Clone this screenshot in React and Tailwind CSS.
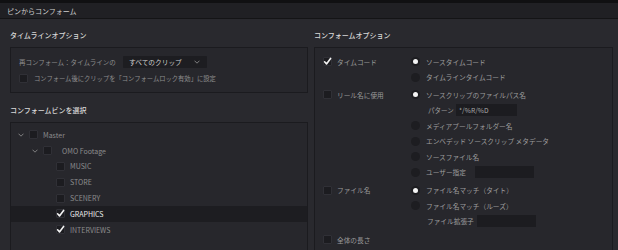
import React from "react";

const font = { fontFamily: '"Noto Sans CJK JP", "Noto Sans", sans-serif' };

function Check({ checked }) {
  return (
    <div className="w-[9px] h-[9px] shrink-0 rounded-[1px] bg-[#1c1c20] border border-[#303036] flex items-center justify-center">
      {checked && (
        <svg width="9" height="9" viewBox="0 0 9 9" className="overflow-visible">
          <path d="M1.6 4.8 L3.5 6.9 L7.6 1.4" fill="none" stroke="#f2f2f2" strokeWidth="1.6" strokeLinecap="round" strokeLinejoin="round" />
        </svg>
      )}
    </div>
  );
}

function Radio({ on }) {
  return (
    <div className="w-[9px] h-[9px] shrink-0 rounded-full bg-[#1d1d21] flex items-center justify-center">
      {on && <div className="w-[5px] h-[5px] rounded-full bg-[#f4f4f4]" />}
    </div>
  );
}

function Chevron() {
  return (
    <svg width="6" height="4" viewBox="0 0 6 4">
      <path d="M0.5 0.7 L3 3.2 L5.5 0.7" fill="none" stroke="#8a8a8a" strokeWidth="0.9" />
    </svg>
  );
}

function TreeRow({ indent, chevron, checked, label, selected, bright, gap = 5 }) {
  return (
    <div className={`h-[15.8px] flex items-center ${selected ? "bg-[#1d1d21]" : ""}`}>
      <div style={{ width: indent }} className="shrink-0" />
      <div className="w-[11px] shrink-0 flex items-center justify-start">{chevron && <Chevron />}</div>
      <Check checked={checked} />
      <span style={{ marginLeft: gap }} className={`text-[7px] leading-[12px] ${bright ? "text-[#ececec]" : "text-[#8c8c8c]"}`}>{label}</span>
    </div>
  );
}

function ORow({ left, children }) {
  return (
    <div className="h-[15.5px] flex items-center">
      <div className="w-[88px] shrink-0 flex items-center">
        {left && (
          <>
            <Check checked={left.checked} />
            <span className="ml-[5px] text-[6.7px] leading-[12px] text-[#9a9a9a]">{left.label}</span>
          </>
        )}
      </div>
      <div className="flex items-center">{children}</div>
    </div>
  );
}

function RadioItem({ on, label }) {
  return (
    <>
      <Radio on={on} />
      <span className="ml-[6px] text-[6.7px] leading-[12px] text-[#9e9e9e] whitespace-nowrap">{label}</span>
    </>
  );
}

export default function App() {
  return (
    <div style={font} className="w-[618px] h-[250px] overflow-hidden bg-[#29292e] flex flex-col">
      <div className="h-[3px] bg-[#101012] shrink-0" />
      <div className="h-[16px] shrink-0 bg-[#202024] border-b border-[#141416] flex items-center pl-[7px]">
        <span className="text-[7px] leading-[12px] text-[#cfcfcf]">ピンからコンフォーム</span>
      </div>
      <div className="flex pl-[10px] gap-[6px] flex-1">
        {/* Left column */}
        <div className="w-[298px] flex flex-col">
          <div className="mt-[9px] h-[14px] flex items-center text-[7px] leading-[12px] text-[#d8d8d8] font-medium">タイムラインオプション</div>
          <div className="mt-[5px] h-[46px] border border-[#1b1b1f] bg-[#27272c] pl-[8px] pt-[7px]">
            <div className="h-[13px] flex items-center">
              <div className="w-[104px] shrink-0 whitespace-nowrap text-[6.5px] leading-[12px] text-[#8e8e8e]">再コンフォーム：タイムラインの</div>
              <div className="w-[84px] h-[12px] bg-[#1d1d21] rounded-[1px] flex items-center pl-[6px] pr-[7px] justify-between">
                <span className="text-[6.7px] leading-[12px] text-[#cfcfcf]">すべてのクリップ</span>
                <Chevron />
              </div>
            </div>
            <div className="mt-[5px] h-[11px] flex items-center">
              <Check checked={false} />
              <span className="ml-[6px] text-[6.3px] leading-[12px] text-[#8e8e8e] whitespace-nowrap">コンフォーム後にクリップを「コンフォームロック有効」に設定</span>
            </div>
          </div>
          <div className="mt-[10px] h-[14px] flex items-center text-[7px] leading-[12px] text-[#d8d8d8] font-medium">コンフォームビンを選択</div>
          <div className="mt-[5px] flex-1 border border-[#1b1b1f] border-b-0 bg-[#27272c] pt-[4px]">
            <TreeRow indent={7} chevron checked={false} label="Master" />
            <TreeRow indent={21} chevron checked={false} label="OMO Footage" gap={10} />
            <TreeRow indent={34} checked={false} label="MUSIC" />
            <TreeRow indent={34} checked={false} label="STORE" />
            <TreeRow indent={34} checked={false} label="SCENERY" />
            <TreeRow indent={34} checked label="GRAPHICS" selected bright />
            <TreeRow indent={34} checked label="INTERVIEWS" />
          </div>
        </div>
        {/* Right column */}
        <div className="w-[299px] flex flex-col">
          <div className="mt-[9px] h-[14px] flex items-center text-[7px] leading-[12px] text-[#d8d8d8] font-medium">コンフォームオプション</div>
          <div className="mt-[5px] flex-1 border border-[#1b1b1f] border-b-0 bg-[#27272c] pl-[8px] pt-[6px]">
            <div>
              <ORow left={{ checked: true, label: "タイムコード" }}><RadioItem on label="ソースタイムコード" /></ORow>
              <ORow><RadioItem label="タイムラインタイムコード" /></ORow>
            </div>
            <div className="mt-[2px]">
              <ORow left={{ checked: false, label: "リール名に使用" }}><RadioItem on label="ソースクリップのファイルパス名" /></ORow>
              <ORow>
                <div className="w-[17px] shrink-0" />
                <div className="w-[28px] shrink-0 whitespace-nowrap text-[6.5px] leading-[12px] text-[#9e9e9e]">パターン</div>
                <div className="w-[61px] h-[12px] bg-[#1c1c20] flex items-center pl-[3px]">
                  <span className="text-[6.7px] leading-[12px] text-[#a8a8a8]">*/%R/%D</span>
                </div>
              </ORow>
              <ORow><RadioItem label="メディアプールフォルダー名" /></ORow>
              <ORow><RadioItem label="エンベデッド ソースクリップ メタデータ" /></ORow>
              <ORow><RadioItem label="ソースファイル名" /></ORow>
              <ORow>
                <Radio />
                <div className="ml-[6px] w-[49px] shrink-0 whitespace-nowrap text-[6.7px] leading-[12px] text-[#9e9e9e]">ユーザー指定</div>
                <div className="w-[59px] h-[12px] bg-[#1c1c20]" />
              </ORow>
            </div>
            <div className="mt-[2.5px]">
              <ORow left={{ checked: false, label: "ファイル名" }}><RadioItem on label="ファイル名マッチ（タイト）" /></ORow>
              <ORow><RadioItem label="ファイル名マッチ（ルーズ）" /></ORow>
              <ORow>
                <div className="w-[16px] shrink-0" />
                <div className="w-[50px] shrink-0 whitespace-nowrap text-[6.7px] leading-[12px] text-[#9e9e9e]">ファイル拡張子</div>
                <div className="w-[59px] h-[12px] bg-[#1c1c20]" />
              </ORow>
            </div>
            <div className="mt-[3px]">
              <ORow left={{ checked: false, label: "全体の長さ" }} />
            </div>
          </div>
        </div>
      </div>
    </div>
  );
}
